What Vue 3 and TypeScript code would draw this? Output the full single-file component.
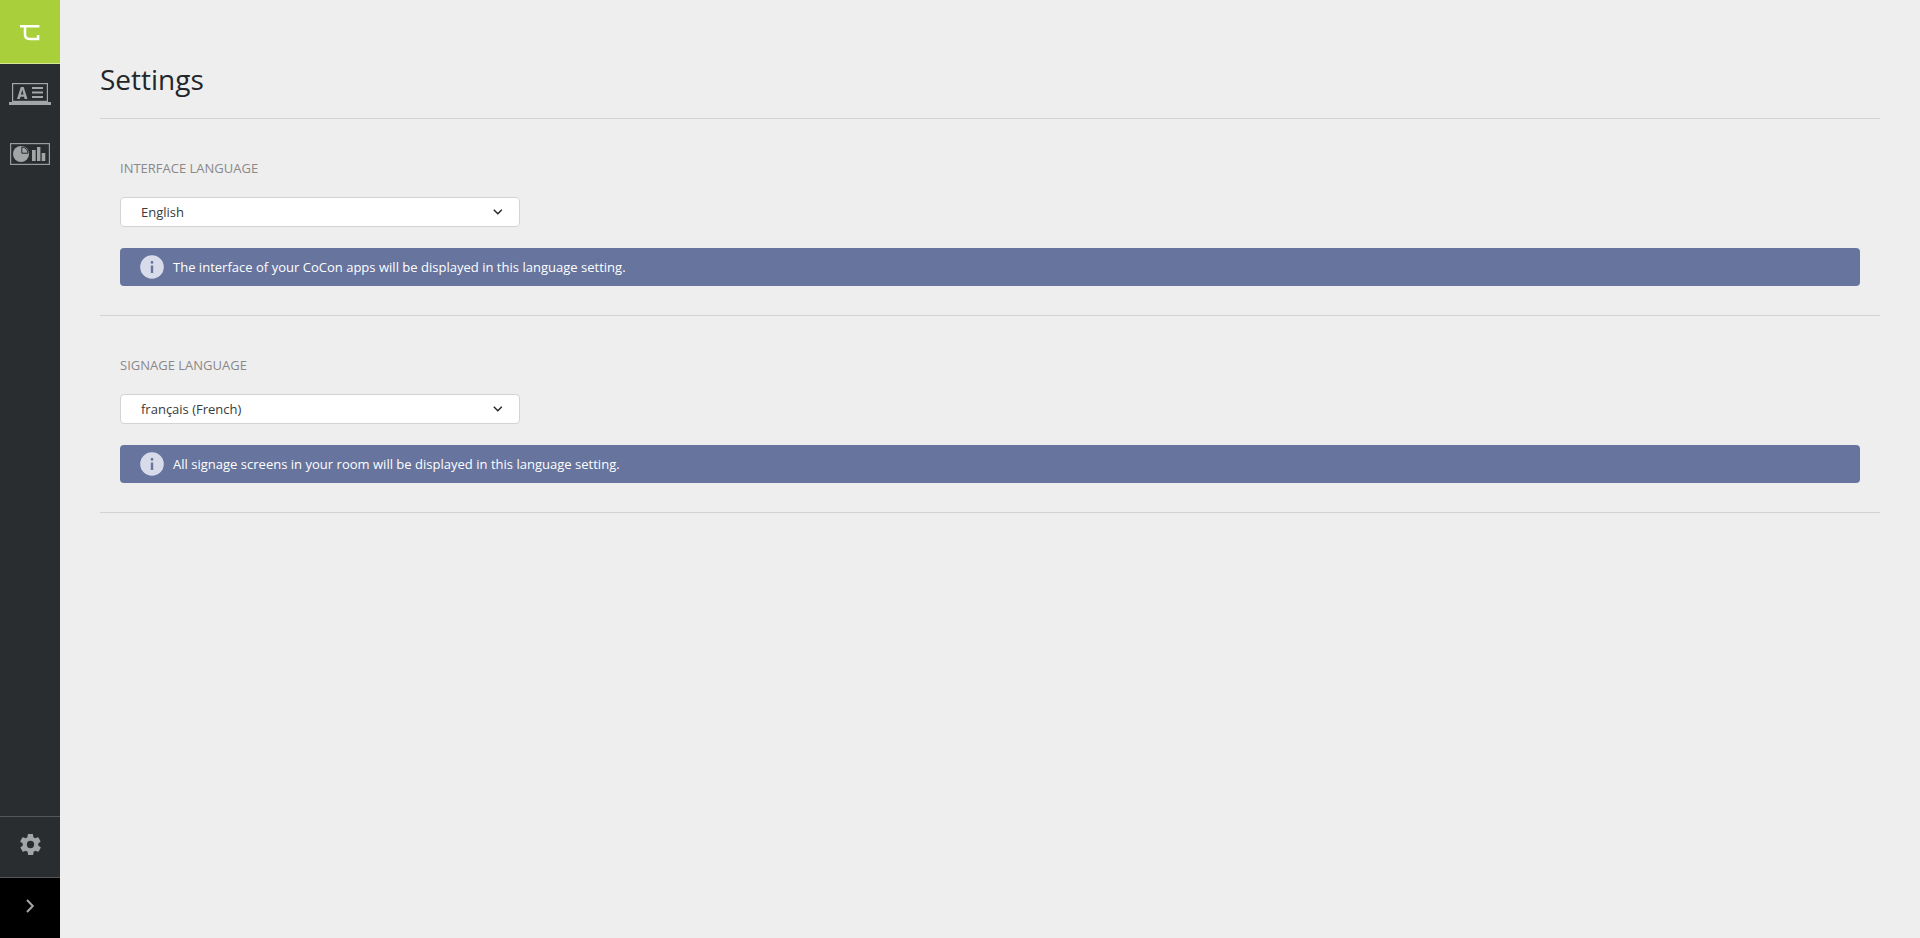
<script setup lang="ts">
interface LanguageSetting {
  label: string
  value: string
  hint: string
}

const settings: LanguageSetting[] = [
  {
    label: 'Interface language',
    value: 'English',
    hint: 'The interface of your CoCon apps will be displayed in this language setting.',
  },
  {
    label: 'Signage language',
    value: 'français (French)',
    hint: 'All signage screens in your room will be displayed in this language setting.',
  },
]
</script>

<template>
  <div class="layout">
    <aside class="sidebar">
      <div class="logo">
        <svg width="20" height="19" viewBox="0 0 20 19" fill="none" stroke="#fff" stroke-width="2.500">
          <path d="M0 4.200H19.400M5 4.200V12.500Q5 16.900 9.500 16.900H18.100V13" />
        </svg>
      </div>
      <nav class="nav">
        <a class="nav-item first">
          <svg width="42" height="22" viewBox="0 0 42 22" fill="#a3a5a6">
            <rect x="3.600" y="0.600" width="34.800" height="17.800" fill="none" stroke="#a3a5a6" stroke-width="1.200" />
            <rect x="0" y="19" width="42" height="3" />
            <path d="M8 16L11.800 4H14.700L18.500 16H15.600L15 13.700H11.500L10.900 16ZM12 11.400H14.500L13.250 6.800Z" />
            <path d="M23 4H34V6H23ZM23 8.500H34V10.500H23ZM23 13H34V15H23Z" />
          </svg>
        </a>
        <a class="nav-item second">
          <svg width="40" height="22" viewBox="0 0 40 22" fill="#a3a5a6">
            <rect x="0.600" y="0.600" width="38.800" height="20.800" fill="none" stroke="#9a9c9d" stroke-width="1.200" />
            <circle cx="11" cy="11" r="8" />
            <path d="M11.800 10.200V4A6.400 6.400 0 0 1 18 10.200Z" fill="#a3a5a6" stroke="#292d30" stroke-width="1" />
            <path d="M22 7H25.700V18H22ZM27 4H30.400V18H27ZM31.700 10H35.300V18H31.700Z" />
          </svg>
        </a>
      </nav>
      <a class="side-settings">
        <svg width="25" height="25" viewBox="0 0 24 24" fill="#a3a5a6">
          <path d="M19.400 13a7.500 7.500 0 0 0 0-2l2.100-1.600a.5.5 0 0 0 .1-.6l-2-3.500a.5.5 0 0 0-.6-.2l-2.500 1a7.300 7.300 0 0 0-1.700-1l-.4-2.600a.5.5 0 0 0-.5-.5h-4a.5.5 0 0 0-.5.5l-.4 2.600a7.300 7.300 0 0 0-1.700 1l-2.500-1a.5.5 0 0 0-.6.2l-2 3.500a.5.5 0 0 0 .1.6L4.600 11a7.500 7.500 0 0 0 0 2l-2.100 1.600a.5.5 0 0 0-.1.6l2 3.500a.5.5 0 0 0 .6.2l2.500-1a7.300 7.300 0 0 0 1.700 1l.4 2.600a.5.5 0 0 0 .5.5h4a.5.5 0 0 0 .5-.5l.4-2.600a7.300 7.300 0 0 0 1.700-1l2.500 1a.5.5 0 0 0 .6-.2l2-3.500a.5.5 0 0 0-.1-.6ZM12 15.500a3.500 3.500 0 1 1 0-7 3.500 3.500 0 0 1 0 7Z" />
        </svg>
      </a>
      <a class="side-toggle">
        <svg width="10" height="14" viewBox="0 0 10 14" fill="none" stroke="#a3a5a6" stroke-width="2">
          <path d="M2 1L7.800 7L2 13" />
        </svg>
      </a>
    </aside>

    <main class="content">
      <h1>Settings</h1>
      <section v-for="item in settings" :key="item.label" class="setting">
        <h2>{{ item.label }}</h2>
        <div class="select">
          <span>{{ item.value }}</span>
          <svg width="10" height="6" viewBox="0 0 10 6" fill="none" stroke="#22262b" stroke-width="1.400">
            <path d="M0.800 0.800L4.800 4.800L8.800 0.800" />
          </svg>
        </div>
        <div class="info">
          <span class="info-icon">
            <svg width="24" height="24" viewBox="0 0 24 24">
              <circle cx="12" cy="12" r="11.800" fill="#d8dcea" />
              <rect x="10.800" y="6" width="2.400" height="2.600" fill="#66749e" />
              <rect x="10.800" y="10.500" width="2.400" height="7.500" fill="#66749e" />
            </svg>
          </span>
          <span class="info-text">{{ item.hint }}</span>
        </div>
      </section>
    </main>
  </div>
</template>

<style scoped>
.layout {
  display: flex;
  min-height: 938px;
  background: #eeeeee;
  font-family: 'Open Sans', 'Liberation Sans', sans-serif;
}

.sidebar {
  flex: 0 0 60px;
  display: flex;
  flex-direction: column;
  background: #292d30;
}

.logo {
  height: 63px;
  border-bottom: 1px solid #d5e89a;
  background: #a9d03b;
  display: flex;
  align-items: center;
  justify-content: center;
}

.nav {
  flex: 1;
  display: flex;
  flex-direction: column;
}

.nav-item {
  display: flex;
  justify-content: center;
}

.nav-item.first {
  margin-top: 19px;
}

.nav-item.second {
  margin-top: 38px;
}

.side-settings {
  height: 54px;
  padding-bottom: 6px;
  border-top: 1px solid #55585b;
  border-bottom: 1px solid #55585b;
  display: flex;
  align-items: center;
  justify-content: center;
}

.side-toggle {
  height: 56px;
  padding-bottom: 4px;
  background: #000;
  display: flex;
  align-items: center;
  justify-content: center;
}

.content {
  flex: 1;
  padding: 0 40px;
}

h1 {
  margin: 0;
  padding: 61px 0 21px;
  border-bottom: 1px solid #d3d3d3;
  font-size: 28px;
  line-height: 36px;
  font-weight: 400;
  color: #22262b;
}

.setting {
  padding: 40px 20px 29px;
  border-bottom: 1px solid #d3d3d3;
}

h2 {
  margin: 0 0 20px;
  font-size: 13px;
  line-height: 18px;
  font-weight: 400;
  text-transform: uppercase;
  color: #8b8889;
}

.select {
  width: 400px;
  height: 30px;
  box-sizing: border-box;
  padding: 0 16px 0 20px;
  border: 1px solid #d3d3d3;
  border-radius: 4px;
  background: #fff;
  display: flex;
  align-items: center;
  justify-content: space-between;
  font-size: 13px;
  color: #3a3a3a;
}

.info {
  margin-top: 21px;
  height: 38px;
  padding: 0 20px;
  border-radius: 4px;
  background: #66749e;
  display: flex;
  align-items: center;
  gap: 9px;
  font-size: 13px;
  color: #fff;
}

.info-icon {
  display: flex;
}

.info-text {
  letter-spacing: 0.015px;
}
</style>
